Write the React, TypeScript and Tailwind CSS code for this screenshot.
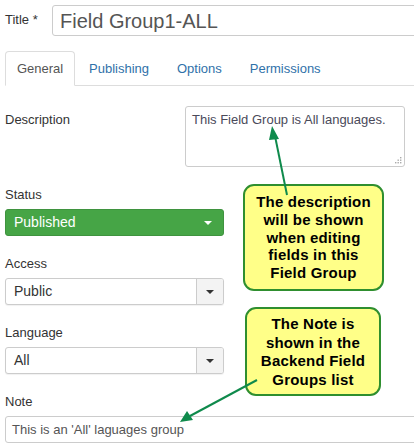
import type { ReactNode } from "react";

const font = { fontFamily: '"Liberation Sans", Arial, Helvetica, sans-serif' };

function Caret({ light }: { light?: boolean }) {
  return (
    <svg width="8" height="4" viewBox="0 0 8 4" aria-hidden="true">
      <path d="M0 0 H8 L4 4 Z" fill={light ? "#ffffff" : "#333333"} />
    </svg>
  );
}

function Label({ children }: { children: ReactNode }) {
  return <div className="h-[18px] text-[13px] leading-[18px] text-[#333]">{children}</div>;
}

function Select({ value }: { value: string }) {
  return (
    <div className="mt-[5px] flex h-[27px] w-[219px] overflow-hidden rounded-[3px] border border-[#ccc] bg-white shadow-[0_1px_1px_rgba(0,0,0,0.06)]">
      <div className="flex flex-1 items-center pl-[8px] text-[14px] text-[#333]">{value}</div>
      <div className="flex w-[27px] items-center justify-center border-l border-[#ccc] bg-[#f3f3f3]">
        <Caret />
      </div>
    </div>
  );
}

function Callout({
  lines,
  className,
}: {
  lines: string[];
  className: string;
}) {
  return (
    <div
      className={`absolute z-10 rounded-[11px] border-2 border-[#2f8f2f] bg-[#ffff88] text-center text-[15px] font-bold tracking-[0.2px] text-black ${className}`}
    >
      {lines.map((line) => (
        <div key={line}>{line}</div>
      ))}
    </div>
  );
}

export default function App() {
  const tabs = ["Publishing", "Options", "Permissions"];

  return (
    <div className="relative h-[447px] w-[414px] overflow-hidden bg-white" style={font}>
      <div className="px-[5px] pt-[5px]">
        {/* title */}
        <div className="flex items-center">
          <div className="w-[47px] shrink-0 whitespace-nowrap pb-[2px] text-[13px] text-[#333]">Title *</div>
          <div className="flex h-[31px] w-[420px] shrink-0 items-center rounded-[3px] border border-[#ccc] pl-[7px] text-[20px] text-[#555]">
            Field Group1-ALL
          </div>
        </div>

        {/* tabs */}
        <div className="mt-[15px] flex h-[35px] w-[420px] items-stretch border-b border-[#ddd] text-[13px]">
          <div className="-mb-px flex w-[70px] items-center justify-center rounded-t-[4px] border border-b-white border-[#ddd] bg-white pt-px text-[#555]">
            General
          </div>
          {tabs.map((tab) => (
            <div key={tab} className="flex items-center px-[14px] pt-px text-[#3071a9] first:pl-[16px]">
              {tab}
            </div>
          ))}
        </div>

        {/* description */}
        <div className="mt-[20px] flex">
          <div className="w-[180px] pt-[5px]">
            <Label>Description</Label>
          </div>
          <div className="relative h-[61px] w-[220px] rounded-[3px] border border-[#ccc] px-[6px] pt-[4px] text-[13px] leading-[18px] text-[#4a4a5a]">
            This Field Group is All languages.
            <svg className="absolute bottom-[2px] right-[2px]" width="7" height="7" viewBox="0 0 7 7" aria-hidden="true">
              <g fill="#aaa">
                <rect x="5" y="0" width="1.4" height="1.4" />
                <rect x="2.5" y="2.5" width="1.4" height="1.4" />
                <rect x="5" y="2.5" width="1.4" height="1.4" />
                <rect x="0" y="5" width="1.4" height="1.4" />
                <rect x="2.5" y="5" width="1.4" height="1.4" />
                <rect x="5" y="5" width="1.4" height="1.4" />
              </g>
            </svg>
          </div>
        </div>

        {/* status */}
        <div className="mt-[19px]">
          <Label>Status</Label>
          <div className="mt-[5px] flex h-[27px] w-[219px] items-center justify-between rounded-[3px] border border-[#3f933f] bg-[#46a546] pl-[8px] pr-[11px] text-[14px] text-white">
            Published
            <Caret light />
          </div>
        </div>

        <div className="mt-[19px]">
          <Label>Access</Label>
          <Select value="Public" />
        </div>

        <div className="mt-[19px]">
          <Label>Language</Label>
          <Select value="All" />
        </div>

        <div className="mt-[19px]">
          <Label>Note</Label>
          <div className="mt-[5px] flex h-[27px] w-[420px] items-center rounded-[3px] border border-[#ccc] pl-[6px] text-[13px] text-[#555]">
            This is an 'All' laguages group
          </div>
        </div>
      </div>

      <Callout
        className="left-[243px] top-[184px] h-[107px] w-[141px] pt-[7px] leading-[17.8px]"
        lines={["The description", "will be shown", "when editing", "fields in this", "Field Group"]}
      />
      <Callout
        className="left-[245px] top-[307px] h-[89px] w-[136px] pt-[6px] leading-[18.7px]"
        lines={["The Note is", "shown in the", "Backend Field", "Groups list"]}
      />

      <svg className="pointer-events-none absolute inset-0 z-20" width="414" height="447" viewBox="0 0 414 447" aria-hidden="true">
        <g stroke="#0f8a4c" strokeWidth="2" fill="#0f8a4c">
          <line x1="287" y1="195" x2="275" y2="136" />
          <path d="M272 126 L279 139 L269 140 Z" stroke="none" />
          <line x1="257" y1="380" x2="190" y2="416" />
          <path d="M180 422 L187 411 L193 420 Z" stroke="none" />
        </g>
      </svg>
    </div>
  );
}
